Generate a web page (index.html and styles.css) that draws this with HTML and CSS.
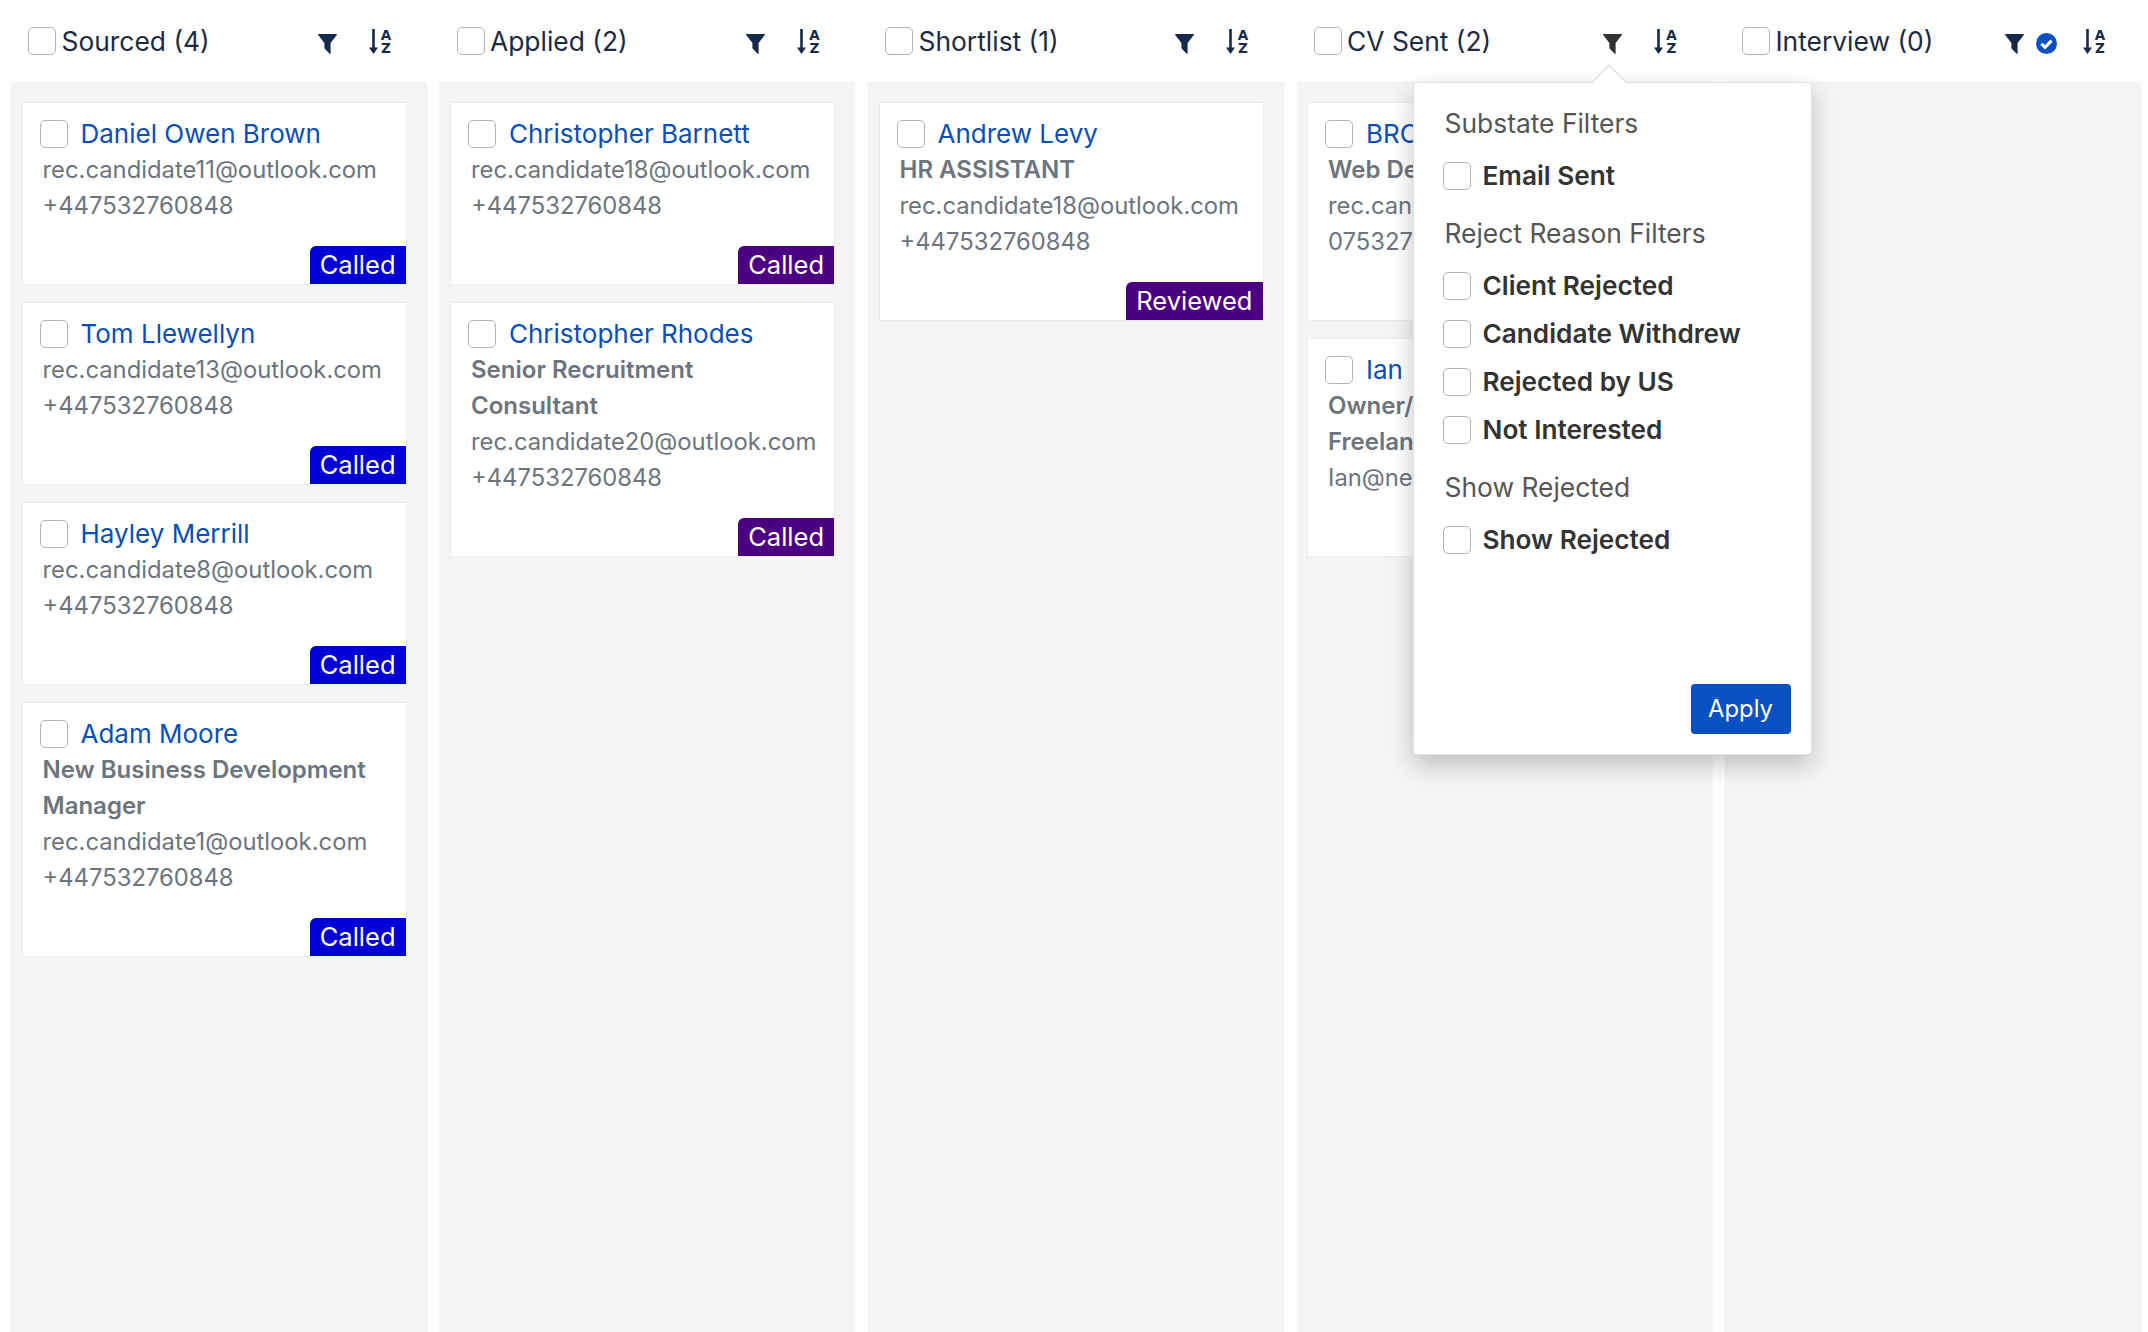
FILE: index.html
```html
<!DOCTYPE html>
<html lang="en">
<head>
<meta charset="utf-8">
<title>Pipeline board</title>
<link rel="stylesheet" href="styles.css">
</head>
<body>
<svg class="defs" width="0" height="0" aria-hidden="true">
  <symbol id="funnel" viewBox="0 0 19 20"><path d="M0.6 0H18.4C18.9 0 19.1 .5 18.8 .9L12.6 9V19.4C12.6 19.9 12.1 20.1 11.7 19.8L6.8 14.7C6.5 14.4 6.4 14.1 6.4 13.8V9L.2 .9C-.1 .5 .1 0 .6 0Z"/></symbol>
  <symbol id="arrow" viewBox="0 0 9 25"><path d="M3.2 0H5.8V18.5H9L4.5 25L0 18.5H3.2Z"/></symbol>
</svg>
<main class="board">
  <section class="col">
    <header class="col-head">
      <input class="check" type="checkbox"><span class="col-title">Sourced (4)</span>
      <span class="tools"><svg class="funnel"><use href="#funnel"/></svg><span class="sort"><svg class="arrow"><use href="#arrow"/></svg><span class="az"><span>A</span><span>Z</span></span></span></span>
    </header>
    <div class="col-body">
      <article class="card">
        <div class="name-row"><input class="check" type="checkbox"><a class="name">Daniel Owen Brown</a></div>
        <div class="line">rec.candidate11@outlook.com</div>
        <div class="line">+447532760848</div>
        <div class="badge-row"><span class="badge blue">Called</span></div>
      </article>
      <article class="card">
        <div class="name-row"><input class="check" type="checkbox"><a class="name">Tom Llewellyn</a></div>
        <div class="line">rec.candidate13@outlook.com</div>
        <div class="line">+447532760848</div>
        <div class="badge-row"><span class="badge blue">Called</span></div>
      </article>
      <article class="card">
        <div class="name-row"><input class="check" type="checkbox"><a class="name">Hayley Merrill</a></div>
        <div class="line">rec.candidate8@outlook.com</div>
        <div class="line">+447532760848</div>
        <div class="badge-row"><span class="badge blue">Called</span></div>
      </article>
      <article class="card">
        <div class="name-row"><input class="check" type="checkbox"><a class="name">Adam Moore</a></div>
        <div class="line role">New Business Development Manager</div>
        <div class="line">rec.candidate1@outlook.com</div>
        <div class="line">+447532760848</div>
        <div class="badge-row"><span class="badge blue">Called</span></div>
      </article>
    </div>
  </section>

  <section class="col">
    <header class="col-head">
      <input class="check" type="checkbox"><span class="col-title">Applied (2)</span>
      <span class="tools"><svg class="funnel"><use href="#funnel"/></svg><span class="sort"><svg class="arrow"><use href="#arrow"/></svg><span class="az"><span>A</span><span>Z</span></span></span></span>
    </header>
    <div class="col-body">
      <article class="card">
        <div class="name-row"><input class="check" type="checkbox"><a class="name">Christopher Barnett</a></div>
        <div class="line">rec.candidate18@outlook.com</div>
        <div class="line">+447532760848</div>
        <div class="badge-row"><span class="badge purple">Called</span></div>
      </article>
      <article class="card">
        <div class="name-row"><input class="check" type="checkbox"><a class="name">Christopher Rhodes</a></div>
        <div class="line role">Senior Recruitment Consultant</div>
        <div class="line">rec.candidate20@outlook.com</div>
        <div class="line">+447532760848</div>
        <div class="badge-row"><span class="badge purple">Called</span></div>
      </article>
    </div>
  </section>

  <section class="col">
    <header class="col-head">
      <input class="check" type="checkbox"><span class="col-title">Shortlist (1)</span>
      <span class="tools"><svg class="funnel"><use href="#funnel"/></svg><span class="sort"><svg class="arrow"><use href="#arrow"/></svg><span class="az"><span>A</span><span>Z</span></span></span></span>
    </header>
    <div class="col-body">
      <article class="card">
        <div class="name-row"><input class="check" type="checkbox"><a class="name">Andrew Levy</a></div>
        <div class="line role">HR ASSISTANT</div>
        <div class="line">rec.candidate18@outlook.com</div>
        <div class="line">+447532760848</div>
        <div class="badge-row"><span class="badge purple">Reviewed</span></div>
      </article>
    </div>
  </section>

  <section class="col">
    <header class="col-head">
      <input class="check" type="checkbox"><span class="col-title">CV Sent (2)</span>
      <span class="tools"><svg class="funnel open"><use href="#funnel"/></svg><span class="sort"><svg class="arrow"><use href="#arrow"/></svg><span class="az"><span>A</span><span>Z</span></span></span></span>
    </header>
    <div class="col-body">
      <article class="card">
        <div class="name-row"><input class="check" type="checkbox"><a class="name">BROWN</a></div>
        <div class="line role">Web Developer</div>
        <div class="line">rec.candidate3@outlook.com</div>
        <div class="line">07532760848</div>
        <div class="badge-row"><span class="badge purple">Called</span></div>
      </article>
      <article class="card">
        <div class="name-row"><input class="check" type="checkbox"><a class="name">Ian</a></div>
        <div class="line role">Owner/Managing Director Freelance</div>
        <div class="line">Ian@network.com</div>
        <div class="badge-row"><span class="badge purple">Called</span></div>
      </article>
    </div>
    <aside class="popover">
      <div class="pop-group">
        <h3 class="pop-heading">Substate Filters</h3>
        <label class="pop-row"><input class="check" type="checkbox">Email Sent</label>
      </div>
      <div class="pop-group">
        <h3 class="pop-heading">Reject Reason Filters</h3>
        <label class="pop-row"><input class="check" type="checkbox">Client Rejected</label>
        <label class="pop-row"><input class="check" type="checkbox">Candidate Withdrew</label>
        <label class="pop-row"><input class="check" type="checkbox">Rejected by US</label>
        <label class="pop-row"><input class="check" type="checkbox">Not Interested</label>
      </div>
      <div class="pop-group">
        <h3 class="pop-heading">Show Rejected</h3>
        <label class="pop-row"><input class="check" type="checkbox">Show Rejected</label>
      </div>
      <button class="apply" type="button">Apply</button>
    </aside>
  </section>

  <section class="col">
    <header class="col-head">
      <input class="check" type="checkbox"><span class="col-title">Interview (0)</span>
      <span class="tools active"><svg class="funnel"><use href="#funnel"/></svg><svg class="tick" viewBox="0 0 20 20"><circle cx="10" cy="10" r="10"/><path d="M5.2 10.4L8.6 13.6L14.8 7.2"/></svg><span class="sort"><svg class="arrow"><use href="#arrow"/></svg><span class="az"><span>A</span><span>Z</span></span></span></span>
    </header>
    <div class="col-body"></div>
  </section>
</main>
</body>
</html>
```
FILE: styles.css
```css
* { box-sizing: border-box; }
html, body { height: 100%; }
body {
  margin: 0;
  overflow: hidden;
  background: #fff;
  font-family: Inter, "Noto Sans", sans-serif;
  font-size: 23.8px;
  line-height: 36px;
  color: #6c757d;
}
.defs { position: absolute; }
.board {
  display: grid;
  grid-template-columns: repeat(5, 1fr);
  column-gap: 13px;
  height: 100%;
  padding: 0 7.5px 0 11px;
}
.col {
  position: relative;
  display: flex;
  flex-direction: column;
  min-width: 0;
}
.col-head {
  display: flex;
  align-items: center;
  flex: 0 0 82px;
  padding: 0 35px 0 17px;
  color: #1c2b41;
}
.col-title { margin-left: 5.5px; font-size: 26.4px; }
.tools {
  display: flex;
  align-items: flex-start;
  margin-left: auto;
  padding-top: 4px;
  fill: #16294a;
}
.funnel { width: 19px; height: 20px; margin-top: 2px; margin-right: 32px; }
.funnel.open { fill: #333; }
.active .funnel { margin-right: 12px; }
.tick { width: 21px; height: 21px; margin-top: 1px; margin-right: 26px; fill: #0b50c0; }
.tick path { fill: none; stroke: #fff; stroke-width: 3; }
.sort { display: flex; gap: 3px; margin-top: -3px; }
.arrow { width: 9px; height: 25px; }
.az {
  display: flex;
  flex-direction: column;
  width: 11px;
  align-items: center;
  font-family: "DejaVu Sans", sans-serif;
  font-size: 13.5px;
  line-height: 13px;
  font-weight: 700;
  color: #16294a;
}
.col-body {
  flex: 1;
  display: flex;
  flex-direction: column;
  gap: 17px;
  padding: 20px 20px 0 10.5px;
  background: #f4f4f4;
  box-shadow: 0 0 0 1px #fafafa;
}
.card {
  padding: 12px 0 0 20px;
  background: #fff;
  border: 1px solid #ececec;
  border-radius: 1px;
}
.name-row { display: flex; align-items: center; height: 37px; margin-left: -3px; }
.name { margin-left: 13px; font-size: 26px; color: #0b4fb3; }
.line { padding-right: 12px; }
.role { font-size: 24px; font-weight: 600; }
.badge-row { display: flex; justify-content: flex-end; margin-top: 22px; }
.badge {
  height: 38px;
  padding: 0 10px;
  border-top-left-radius: 6px;
  font-size: 25.5px;
  line-height: 38px;
  color: #fff;
}
.blue { background: #0000d6; }
.purple { background: #4b0082; }
.check {
  appearance: none;
  flex: none;
  width: 28px;
  height: 28px;
  margin: 0;
  background: #fff;
  border: 1px solid #b4b4b4;
  border-radius: 5px;
}
.popover {
  position: absolute;
  top: 82px;
  left: 116px;
  z-index: 2;
  display: flex;
  flex-direction: column;
  width: 399px;
  height: 673px;
  padding: 22px 20px 20px 30px;
  background: #fff;
  border: 1px solid #e0e0e0;
  border-radius: 4px;
  box-shadow: 0 10px 24px rgba(0, 0, 0, .22);
}
.popover::before {
  content: "";
  position: absolute;
  top: -13px;
  left: 182px;
  width: 25px;
  height: 25px;
  background: #fff;
  border-top: 1px solid #d8d8d8;
  border-left: 1px solid #d8d8d8;
  transform: rotate(45deg);
}
.pop-group { margin-bottom: 15px; }
.pop-heading { margin: 0 0 11px 1px; font-size: 26.4px; font-weight: 400; color: #555; }
.pop-row {
  display: flex;
  align-items: center;
  gap: 12px;
  height: 48px;
  margin-left: -1px;
  font-size: 26.2px;
  font-weight: 600;
  color: #333;
}
.apply {
  align-self: flex-end;
  width: 100px;
  height: 50px;
  margin-top: auto;
  padding: 0;
  background: #0950c3;
  border: 0;
  border-radius: 4px;
  font: inherit;
  color: #fff;
}
```
